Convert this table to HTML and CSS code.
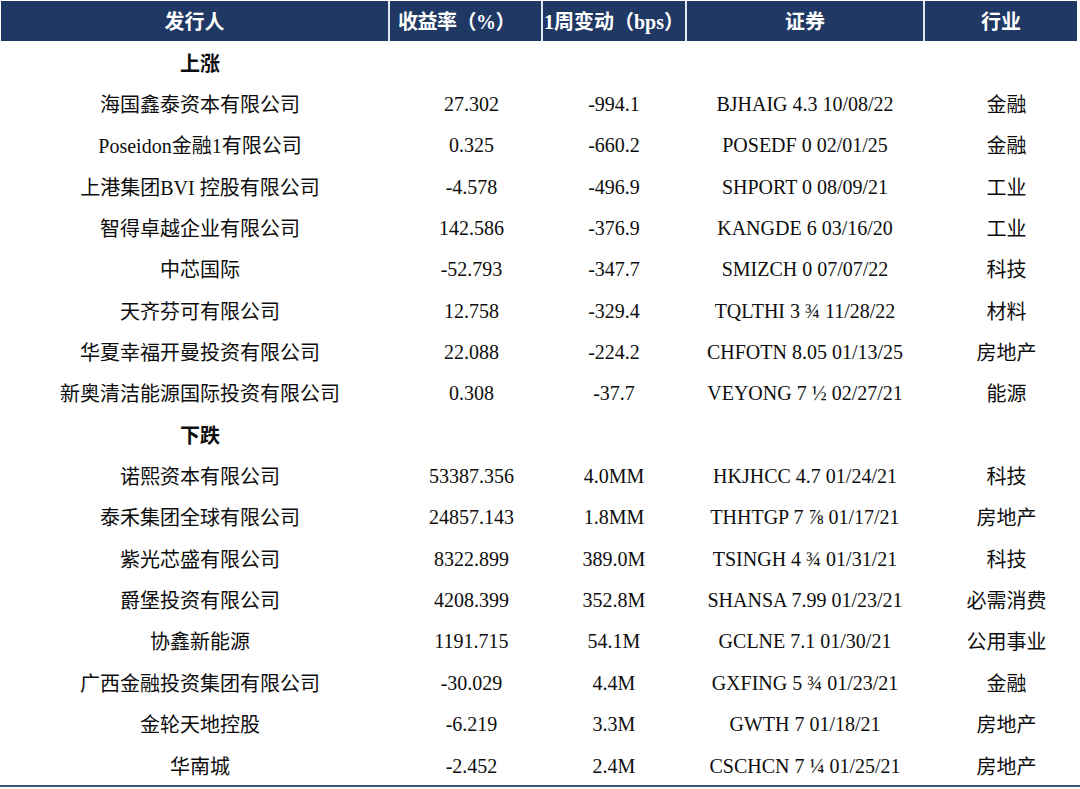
FILE: index.html
```html
<!DOCTYPE html>
<html lang="zh">
<head>
<meta charset="utf-8">
<link rel="stylesheet" href="styles.css">
</head>
<body>
<div class="wrap">
<table class="bonds">
<colgroup>
<col class="c1"><col class="c2"><col class="c3"><col class="c4"><col class="c5">
</colgroup>
<thead>
<tr><th>发行人</th><th class="yield">收益率（%）</th><th class="tight">1周变动（bps）</th><th>证券</th><th>行业</th></tr>
</thead>
<tbody>
<tr class="group"><td>上涨</td><td></td><td></td><td></td><td></td></tr>
<tr><td>海国鑫泰资本有限公司</td><td>27.302</td><td>-994.1</td><td>BJHAIG 4.3 10/08/22</td><td>金融</td></tr>
<tr><td>Poseidon金融1有限公司</td><td>0.325</td><td>-660.2</td><td>POSEDF 0 02/01/25</td><td>金融</td></tr>
<tr><td>上港集团BVI 控股有限公司</td><td>-4.578</td><td>-496.9</td><td>SHPORT 0 08/09/21</td><td>工业</td></tr>
<tr><td>智得卓越企业有限公司</td><td>142.586</td><td>-376.9</td><td>KANGDE 6 03/16/20</td><td>工业</td></tr>
<tr><td>中芯国际</td><td>-52.793</td><td>-347.7</td><td>SMIZCH 0 07/07/22</td><td>科技</td></tr>
<tr><td>天齐芬可有限公司</td><td>12.758</td><td>-329.4</td><td>TQLTHI 3 ¾ 11/28/22</td><td>材料</td></tr>
<tr><td>华夏幸福开曼投资有限公司</td><td>22.088</td><td>-224.2</td><td>CHFOTN 8.05 01/13/25</td><td>房地产</td></tr>
<tr><td>新奥清洁能源国际投资有限公司</td><td>0.308</td><td>-37.7</td><td>VEYONG 7 ½ 02/27/21</td><td>能源</td></tr>
<tr class="group"><td>下跌</td><td></td><td></td><td></td><td></td></tr>
<tr><td>诺熙资本有限公司</td><td>53387.356</td><td>4.0MM</td><td>HKJHCC 4.7 01/24/21</td><td>科技</td></tr>
<tr><td>泰禾集团全球有限公司</td><td>24857.143</td><td>1.8MM</td><td>THHTGP 7 ⅞ 01/17/21</td><td>房地产</td></tr>
<tr><td>紫光芯盛有限公司</td><td>8322.899</td><td>389.0M</td><td>TSINGH 4 ¾ 01/31/21</td><td>科技</td></tr>
<tr><td>爵堡投资有限公司</td><td>4208.399</td><td>352.8M</td><td>SHANSA 7.99 01/23/21</td><td>必需消费</td></tr>
<tr><td>协鑫新能源</td><td>1191.715</td><td>54.1M</td><td>GCLNE 7.1 01/30/21</td><td>公用事业</td></tr>
<tr><td>广西金融投资集团有限公司</td><td>-30.029</td><td>4.4M</td><td>GXFING 5 ¾ 01/23/21</td><td>金融</td></tr>
<tr><td>金轮天地控股</td><td>-6.219</td><td>3.3M</td><td>GWTH 7 01/18/21</td><td>房地产</td></tr>
<tr><td>华南城</td><td>-2.452</td><td>2.4M</td><td>CSCHCN 7 ¼ 01/25/21</td><td>房地产</td></tr>
</tbody>
</table>
<div class="rule"></div>
</div>
</body>
</html>
```
FILE: styles.css
```css
html, body {
  margin: 0;
  padding: 0;
  background: #ffffff;
}
body {
  width: 1080px;
  height: 789px;
  overflow: hidden;
  font-family: "Liberation Serif", "Noto Sans CJK SC", serif;
  color: #0d0d0d;
}
.wrap {
  padding-top: 1px;
}
.bonds {
  margin-left: 1px;
  width: 1076px;
  table-layout: fixed;
  border-collapse: collapse;
}
.c1 { width: 388px; }
.c2 { width: 153px; }
.c3 { width: 144px; }
.c4 { width: 238px; }
.c5 { width: 153px; }
.bonds thead tr {
  height: 40px;
}
.bonds th {
  padding: 2px 0 0;
  background: #1f3864;
  color: #ffffff;
  font-weight: bold;
  font-size: 20px;
  line-height: 28px;
  text-align: center;
  border-left: 2px solid #dfe6f0;
  white-space: nowrap;
}
.bonds th:first-child {
  border-left: none;
}
.bonds th.yield {
  text-align: left;
  padding-left: 8px;
  letter-spacing: -0.5px;
}
.bonds th.tight {
  text-align: left;
  padding-left: 1px;
}
.bonds tbody tr {
  height: 41.35px;
}
.bonds td {
  padding: 4px 0 0;
  font-size: 20px;
  line-height: 28px;
  text-align: center;
  white-space: nowrap;
}
.bonds td:nth-child(1) {
  padding-left: 10px;
}
.bonds td:nth-child(2) {
  padding-left: 12px;
  padding-top: 2px;
}
.bonds td:nth-child(3),
.bonds td:nth-child(4) {
  padding-top: 2px;
}
.bonds td:nth-child(5) {
  padding-left: 12px;
}
.bonds .group td:first-child {
  font-weight: bold;
}
.rule {
  height: 2px;
  background: #3c5478;
}
```
